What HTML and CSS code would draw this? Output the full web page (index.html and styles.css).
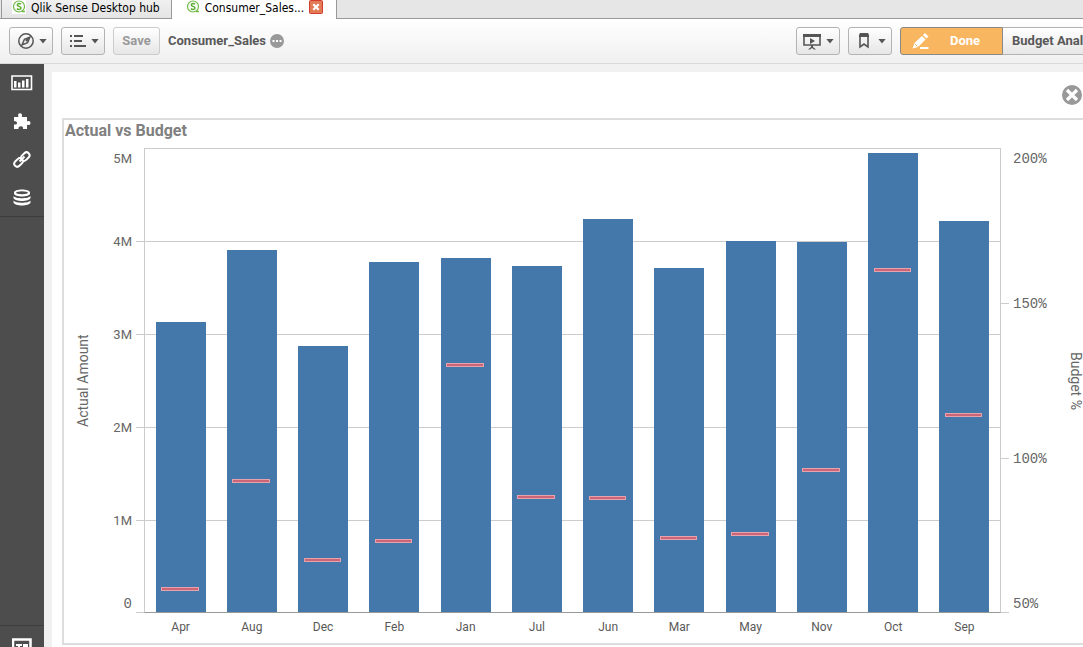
FILE: index.html
```
<!DOCTYPE html>
<html lang="en">
<head>
<meta charset="utf-8">
<title>Consumer_Sales</title>
<meta name="viewport" content="width=device-width, initial-scale=1">
<link rel="stylesheet" href="styles.css">
</head>
<body>
<div class="app">
  <nav class="tabs" aria-label="Open apps">
    <a class="tab" href="#hub">
      <svg class="logo" viewBox="0 0 14 14" aria-hidden="true"><rect width="14" height="14" fill="#fff"/><circle cx="7" cy="6.500" r="5.500" fill="none" stroke="#6db944" stroke-width="1.200"/><path d="M10 11.500h3" stroke="#6db944" stroke-width="1.400"/><path d="M9 4.300C8 3.200 5.300 3.300 5.300 5c0 1.600 3.700 1.200 3.700 3 0 1.700-3 1.800-4 .5" fill="none" stroke="#58ad2f" stroke-width="1.500"/></svg>
      <span>Qlik Sense Desktop hub</span>
    </a>
    <div class="tab tab-active">
      <svg class="logo" viewBox="0 0 14 14" aria-hidden="true"><circle cx="7" cy="6.500" r="5.500" fill="none" stroke="#6db944" stroke-width="1.200"/><path d="M10 11.500h3" stroke="#6db944" stroke-width="1.400"/><path d="M9 4.300C8 3.200 5.300 3.300 5.300 5c0 1.600 3.700 1.200 3.700 3 0 1.700-3 1.800-4 .5" fill="none" stroke="#58ad2f" stroke-width="1.500"/></svg>
      <a href="#app">Consumer_Sales...</a>
      <button class="tab-close" aria-label="Close tab"><svg viewBox="0 0 14 14"><rect x=".5" y=".5" width="13" height="13" rx="1" fill="#e27a55" stroke="#d43c2c"/><path d="M4.300 4.300l5.400 5.400M9.700 4.300l-5.400 5.400" stroke="#fff" stroke-width="2.200"/></svg></button>
    </div>
  </nav>

  <header class="toolbar">
    <button class="btn" aria-label="Navigation">
      <svg width="16" height="16" viewBox="0 0 16 16"><circle cx="8" cy="8" r="7.200" fill="none" stroke="#555" stroke-width="1.500"/><path d="M12 4L9.600 9.600 4 12l2.400-5.600z" fill="none" stroke="#555" stroke-width="1.400"/><path d="M12 4L9 9 7 7z" fill="#555"/></svg>
      <i class="caret"></i>
    </button>
    <button class="btn" aria-label="Menu">
      <svg width="16" height="16" viewBox="0 0 16 16"><path d="M0 3h2M0 8h2M0 13h2M4 3h9M4 8h8M4 13h12" stroke="#555" stroke-width="2"/></svg>
      <i class="caret"></i>
    </button>
    <button class="btn btn-save" disabled>Save</button>
    <h1 class="app-name">Consumer_Sales</h1>
    <button class="more" aria-label="App details"><svg viewBox="0 0 14 14"><circle cx="7" cy="7" r="7" fill="#999"/><path d="M2.500 6h2v2h-2zM6 6h2v2H6zM9.500 6h2v2h-2z" fill="#fff"/></svg></button>
    <div class="actions">
      <button class="btn" aria-label="Stories">
        <svg width="18" height="17" viewBox="0 0 18 17"><path d="M0 1h18v3H0z" fill="#555"/><path d="M1 2v10h16V2" fill="none" stroke="#555" stroke-width="1.600"/><path d="M7 5l5 3-5 3zM8 12h2v2l3 2.500h-2L9 15l-2 1.500H5L8 14z" fill="#555"/></svg>
        <i class="caret"></i>
      </button>
      <button class="btn btn-mark" aria-label="Bookmarks">
        <svg width="10" height="16" viewBox="0 0 10 16"><path d="M0 2l1-2h8l1 2v2H0z" fill="#555"/><path d="M1 2v12L5 11l4 3V2" fill="none" stroke="#555" stroke-width="1.600"/></svg>
        <i class="caret"></i>
      </button>
      <div class="group">
        <button class="btn btn-done">
          <svg width="18" height="16" viewBox="0 0 18 16"><path d="M11 2l2-2 3.500 3.500-2 2zM10 3l3.500 3.500L6 14l-5.500 1.500L2.500 10z" fill="#fff"/><path d="M2.800 10.800l2.700 2.700" stroke="#f9b660"/><path d="M8 15h8.500" stroke="#fff" stroke-width="2"/></svg>
          <span>Done</span>
        </button>
        <button class="btn btn-sheet">Budget Anal</button>
      </div>
    </div>
  </header>

  <div class="body">
    <aside class="sidebar">
      <div class="side-group">
        <button aria-label="Charts"><svg width="22" height="16" viewBox="0 0 22 16"><path d="M1 1h19.500v13.500H1z" fill="none" stroke="#fff" stroke-width="1.600"/><path d="M3 6h2.500v6.500H3zM7 7.500h2.500v5H7zM11 5.500h2.500v7H11zM15 4h2.500v8.500H15z" fill="#fff"/></svg></button>
        <button aria-label="Extensions"><svg width="18" height="17" viewBox="0 0 18 17"><path d="M1 4h4.500C4.500 2 5.300.3 7 .3S9.500 2 8.800 4H14v4.500c2-1 3.500-.3 3.500 1.500s-1.500 2.500-3.500 1.700V16h-4c.4-1.500-.3-2.700-2-2.700S5 14.500 5.500 16H1v-4.500c2 .4 3-.2 3-1.500S3 8 1 8z" fill="#fff"/></svg></button>
        <button aria-label="Master items"><svg width="18" height="17" viewBox="0 0 18 17"><g fill="none" stroke="#fff" stroke-width="2"><rect x="7.500" y="2.500" width="9.500" height="6" rx="3" transform="rotate(-45 12.300 5.500)"/><rect x=".8" y="8.500" width="9.500" height="6" rx="3" transform="rotate(-45 5.500 11.500)"/><path d="M6.500 10.500l5-5"/></g></svg></button>
        <button aria-label="Fields"><svg width="18" height="17" viewBox="0 0 18 17"><path d="M1 3.500c0-4 16-4 16 0v1c0 4-16 4-16 0zM.5 7c2 3 15 3 17 0v2c-1 4-16 4-17 0zM.5 11.500c2 3 15 3 17 0v2c-1 4-16 4-17 0z" fill="#fff"/><ellipse cx="9" cy="3.800" rx="6" ry="1.500" fill="#4d4d4d"/></svg></button>
      </div>
      <div class="side-foot">
        <button aria-label="Text object"><svg width="20" height="18" viewBox="0 0 20 18"><path d="M1 1.500h17.500V17H1z" fill="none" stroke="#fff" stroke-width="2.500"/><path d="M4 6h6v2H8v7H6V8H4zM11 6h5v4h-5z" fill="#fff"/></svg></button>
      </div>
    </aside>

    <main class="sheet">
      <div class="sheet-head">
        <button class="clear" aria-label="Close"><svg viewBox="0 0 20 20"><circle cx="10" cy="10" r="10" fill="#999"/><path d="M5 5l10 10M15 5L5 15" stroke="#fff" stroke-width="3.200"/></svg></button>
      </div>
      <section class="panel">
        <h2 class="chart-title">Actual vs Budget</h2>
        <div class="chart">
          <div class="axis-title axis-title-left">Actual Amount</div>
          <div class="axis axis-left">
            <div><span>5M</span></div><div><span>4M</span></div><div><span>3M</span></div><div><span>2M</span></div><div><span>1M</span><span class="mono last">0</span></div>
          </div>
          <div class="plot">
            <div class="grid"><i></i><i></i><i></i><i></i><i></i></div>
            <div class="bars">
              <div class="bar" style="height:62.700%"><i style="bottom:7.900%"></i></div>
              <div class="bar" style="height:78.200%"><i style="bottom:36.200%"></i></div>
              <div class="bar" style="height:57.500%"><i style="bottom:19.500%"></i></div>
              <div class="bar" style="height:75.600%"><i style="bottom:20.300%"></i></div>
              <div class="bar" style="height:76.400%"><i style="bottom:69.800%"></i></div>
              <div class="bar" style="height:74.800%"><i style="bottom:33.200%"></i></div>
              <div class="bar" style="height:84.900%"><i style="bottom:29%"></i></div>
              <div class="bar" style="height:74.200%"><i style="bottom:21.500%"></i></div>
              <div class="bar" style="height:80.100%"><i style="bottom:21%"></i></div>
              <div class="bar" style="height:79.900%"><i style="bottom:38.400%"></i></div>
              <div class="bar" style="height:99.100%"><i style="bottom:74.500%"></i></div>
              <div class="bar" style="height:84.500%"><i style="bottom:50.400%"></i></div>
            </div>
          </div>
          <div class="axis axis-right mono">
            <div><span>200%</span></div><div><span>150%</span></div><div><span>100%</span><span class="last">50%</span></div>
          </div>
          <div class="axis-title">Budget %</div>
          <div class="months">
            <span>Apr</span><span>Aug</span><span>Dec</span><span>Feb</span><span>Jan</span><span>Jul</span><span>Jun</span><span>Mar</span><span>May</span><span>Nov</span><span>Oct</span><span>Sep</span>
          </div>
        </div>
      </section>
    </main>
  </div>
</div>
</body>
</html>
```
FILE: styles.css
```
* { box-sizing: border-box; }
body { margin: 0; font-family: Roboto, "Open Sans", sans-serif; color: #595959; background: #fff; }
button { margin: 0; padding: 0; border: 0; background: none; font: inherit; color: inherit; cursor: pointer; }
svg { display: block; flex: none; }
a { color: inherit; text-decoration: none; }
h1, h2 { margin: 0; }

.app { display: flex; flex-direction: column; height: 100vh; overflow: hidden; }

.tabs { display: flex; flex: none; height: 19px; padding-left: 1px; background: #e6e6e6; box-shadow: inset 0 -1px #999; font: 12px/17px "DejaVu Sans Condensed", "DejaVu Sans", sans-serif; color: #000; }
.tab { display: flex; align-items: flex-start; gap: 5px; padding: 0 11px 0 10px; border: 1px solid #999; border-top: 0; background: linear-gradient(#f0f0f0, #e4e4e4); white-space: nowrap; }
.tab-active { gap: 5px; padding: 0 13px 0 14px; border-left: 0; border-bottom: 0; background: #fff; line-height: 16px; }
.logo { width: 14px; height: 14px; }
.tab-close { width: 14px; }

.toolbar { display: flex; align-items: center; flex: none; gap: 8px; height: 45px; padding-left: 9px; border-bottom: 1px solid #d9d9d9; background: linear-gradient(#fff, #f0f0f0); font-size: 13px; line-height: 16px; font-weight: 700; }
.btn { display: flex; align-items: center; justify-content: space-between; flex: none; width: 44px; height: 28px; padding: 0 5px 0 8px; border: 1px solid #b3b3b3; border-radius: 3px; background: linear-gradient(#fff, #e6e6e6); }
.actions .btn { padding-left: 6px; }
.actions .btn-mark { padding-left: 10px; }
.caret { width: 8px; height: 5px; background: #555; clip-path: polygon(0 0, 100% 0, 50% 100%); }
.btn-save { justify-content: center; width: 47px; padding: 0; border-color: #ccc; color: #999; }
.app-name { font-size: 13px; }
.more { width: 14px; height: 14px; margin-left: -4px; }
.actions { display: flex; gap: 8px; margin-left: auto; }
.group { display: flex; }
.actions .btn-done { gap: 20px; justify-content: flex-start; width: 103px; padding-left: 11px; border-color: #888; border-radius: 3px 0 0 3px; background: #f9b660; color: #fff; }
.actions .btn-sheet { width: 80px; padding: 0 0 0 9px; border-left: 0; border-right: 0; border-radius: 0; white-space: nowrap; }

.body { display: flex; flex: 1; min-height: 0; background: #f1f1f1; }
.sidebar { display: flex; flex-direction: column; justify-content: space-between; flex: none; width: 44px; background: #4d4d4d; }
.side-group { border-bottom: 1px solid #3d3d3d; }
.sidebar button { display: flex; align-items: center; justify-content: center; width: 100%; height: 38px; }
.side-foot { height: 22px; overflow: hidden; border-top: 1px solid #3d3d3d; }
.side-foot button { padding-top: 4px; }

.sheet { display: flex; flex-direction: column; flex: 1; min-width: 0; margin: 8px 0 0 8px; padding: 0 0 2px 10px; background: #fff; }
.sheet-head { display: flex; justify-content: flex-end; align-items: center; flex: none; height: 46px; padding-right: 1px; }
.clear { width: 20px; height: 20px; }
.panel { display: flex; flex-direction: column; flex: 1; min-height: 0; border: 2px solid #ddd; border-right: 0; }
.chart-title { flex: none; height: 28px; padding-left: 1px; font-size: 16px; line-height: 22px; color: #808080; }
.chart { display: grid; grid-template-columns: 38px 42px 1fr 68px 14px; grid-template-rows: 1fr 30px; flex: 1; min-height: 0; font-size: 13px; }
.axis-title { display: flex; align-items: center; justify-content: center; writing-mode: vertical-rl; white-space: nowrap; font-size: 14px; color: #666; }
.axis-title-left { transform: rotate(180deg); }

.axis { display: flex; flex-direction: column; line-height: 22px; color: #666; background: linear-gradient(#ccc, #ccc) right bottom / 8px 1px no-repeat; }
.axis div { display: flex; flex-direction: column; justify-content: space-between; flex: 1; }
.axis div:not(:first-child) > span:first-child { margin-top: -10px; }
.axis-left div { padding-right: 12px; text-align: right; background: linear-gradient(#ccc, #ccc) right top / 8px 1px no-repeat; }
.axis-right div { padding-left: 12px; background: linear-gradient(#ccc, #ccc) left top / 8px 1px no-repeat; }
.axis div:first-child { background: none; }
.axis-right { background-position: left bottom; }
.mono { font-family: "Liberation Mono", monospace; font-size: 14px; }
.axis .last { line-height: 17px; }

.plot { display: grid; border: 1px solid #ccc; border-bottom-color: #999; }
.grid, .bars { grid-area: 1 / 1; }
.grid { display: flex; flex-direction: column; margin: -1px 0; }
.grid i { flex: 1; }
.grid i + i { background: linear-gradient(#ccc, #ccc) left top / 100% 1px no-repeat; }
.bars, .months { display: grid; grid-template-columns: repeat(12, 1fr); justify-items: center; }
.bars { align-items: end; }
.bar { position: relative; width: 70%; background: #4477aa; }
.bar i { position: absolute; left: 11%; width: 75%; height: 4px; background: #cc6677; border: 1px solid #e6a3ae; transform: translateY(50%); }
.months { grid-column: 3; padding: 0 1px; font-size: 12px; line-height: 28px; }
```
